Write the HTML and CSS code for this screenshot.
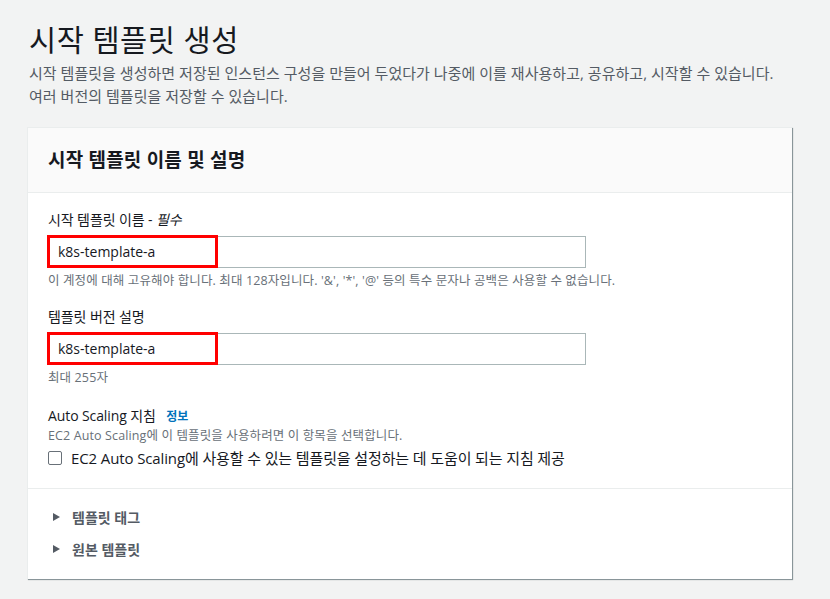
FILE: index.html
```html
<!DOCTYPE html>
<html lang="ko">
<head>
<meta charset="utf-8">
<title>시작 템플릿 생성</title>
<link rel="stylesheet" href="styles.css">
</head>
<body>
<main class="page">
  <header class="page-head">
    <h1 class="page-title">시작 템플릿 생성</h1>
    <p class="page-desc">시작 템플릿을 생성하면 저장된 인스턴스 구성을 만들어 두었다가 나중에 이를 재사용하고, 공유하고, 시작할 수 있습니다.<br>여러 버전의 템플릿을 저장할 수 있습니다.</p>
  </header>

  <section class="card">
    <div class="card-head">
      <h2 class="card-title">시작 템플릿 이름 및 설명</h2>
    </div>
    <div class="card-body">
      <div class="field">
        <label class="label">시작 템플릿 이름 - <i>필수</i></label>
        <div class="input-wrap">
          <div class="input">k8s-template-a</div>
          <span class="highlight"></span>
        </div>
        <p class="help">이 계정에 대해 고유해야 합니다. 최대 128자입니다. '&amp;', '*', '@' 등의 특수 문자나 공백은 사용할 수 없습니다.</p>
      </div>
      <div class="field">
        <label class="label">템플릿 버전 설명</label>
        <div class="input-wrap">
          <div class="input">k8s-template-a</div>
          <span class="highlight"></span>
        </div>
        <p class="help">최대 255자</p>
      </div>
      <div class="field field-last">
        <div class="label">Auto Scaling 지침 <a class="info" href="#">정보</a></div>
        <p class="help help-top">EC2 Auto Scaling에 이 템플릿을 사용하려면 이 항목을 선택합니다.</p>
        <div class="check-row">
          <span class="checkbox"></span>
          <span class="check-label">EC2 Auto Scaling에 사용할 수 있는 템플릿을 설정하는 데 도움이 되는 지침 제공</span>
        </div>
      </div>
    </div>
    <div class="card-foot">
      <div class="expander"><span class="tri"></span>템플릿 태그</div>
      <div class="expander"><span class="tri"></span>원본 템플릿</div>
    </div>
  </section>
</main>
</body>
</html>
```

FILE: styles.css
```css
* { box-sizing: border-box; }
html, body { margin: 0; padding: 0; }
body {
  background: #f2f3f3;
  color: #16191f;
  font-family: "Open Sans", "Noto Sans CJK KR", sans-serif;
  font-size: 14px;
  width: 830px;
  height: 599px;
  overflow: hidden;
}
.page {
  padding: 20px 0 0 27px;
  width: 792px;
}
.page-head { padding-left: 2px; }
.page-title {
  margin: 0;
  font-size: 29.5px;
  font-weight: 400;
  line-height: 40px;
  color: #16191f;
  letter-spacing: 0.5px;
}
.page-desc {
  margin: 2px 0 0;
  font-size: 15px;
  line-height: 23px;
  color: #545b64;
  letter-spacing: 0.03px;
  white-space: nowrap;
}
.card {
  margin-top: 19px;
  background: #fff;
  box-shadow: 1px 1px 1px 0 rgba(0, 28, 36, 0.3), 1px 1px 0 0 #c5cbcc;
  border-top: 1px solid #eaeded;
  border-left: 1px solid #eaeded;
}
.card-head {
  background: #fafafa;
  border-bottom: 1px solid #eaeded;
  height: 65px;
  display: flex;
  align-items: center;
  padding: 0 20px;
}
.card-title {
  margin: 0;
  font-size: 19px;
  font-weight: 700;
  line-height: 24px;
  letter-spacing: 0.2px;
}
.card-body {
  padding: 17px 20px 19px 20px;
  border-bottom: 1px solid #eaeded;
}
.field { margin-bottom: 18px; }
.field-last { margin-bottom: 0; margin-top: 20px; }
.label {
  display: block;
  font-size: 14px;
  line-height: 20px;
  color: #16191f;
  margin-bottom: 6px;
  letter-spacing: -0.1px;
}
.label i { font-style: italic; }
.info {
  color: #0073bb;
  font-size: 12px;
  font-weight: 700;
  text-decoration: none;
  margin-left: 7px;
}
.input-wrap {
  position: relative;
  width: 538px;
}
.input {
  height: 32px;
  border: 1px solid #aab7b8;
  background: #fff;
  padding: 0 9px;
  line-height: 30px;
  font-size: 14px;
  color: #16191f;
}
.highlight {
  position: absolute;
  left: -1px;
  top: -1px;
  width: 171px;
  height: 33px;
  border: 3px solid #ff0000;
  pointer-events: none;
}
.help {
  margin: 5px 0 0;
  font-size: 12.5px;
  line-height: 16px;
  color: #687078;
  letter-spacing: 0.12px;
  white-space: nowrap;
}
.help-top { margin: -5px 0 3px; }
.check-row {
  display: flex;
  align-items: center;
  height: 22px;
}
.checkbox {
  width: 14px;
  height: 14px;
  border: 1px solid #687078;
  border-radius: 2px;
  background: #fff;
  margin: 0 9px 0 0;
  flex: none;
}
.check-label {
  font-size: 15px;
  line-height: 20px;
  color: #16191f;
  letter-spacing: -0.12px;
}
.card-foot {
  padding: 12px 20px 14px 25px;
}
.expander {
  display: flex;
  align-items: center;
  height: 32px;
  font-size: 14px;
  font-weight: 700;
  color: #545b64;
}
.tri {
  width: 0;
  height: 0;
  border-top: 4.5px solid transparent;
  border-bottom: 4.5px solid transparent;
  border-left: 7px solid #545b64;
  margin-right: 12px;
}
```
